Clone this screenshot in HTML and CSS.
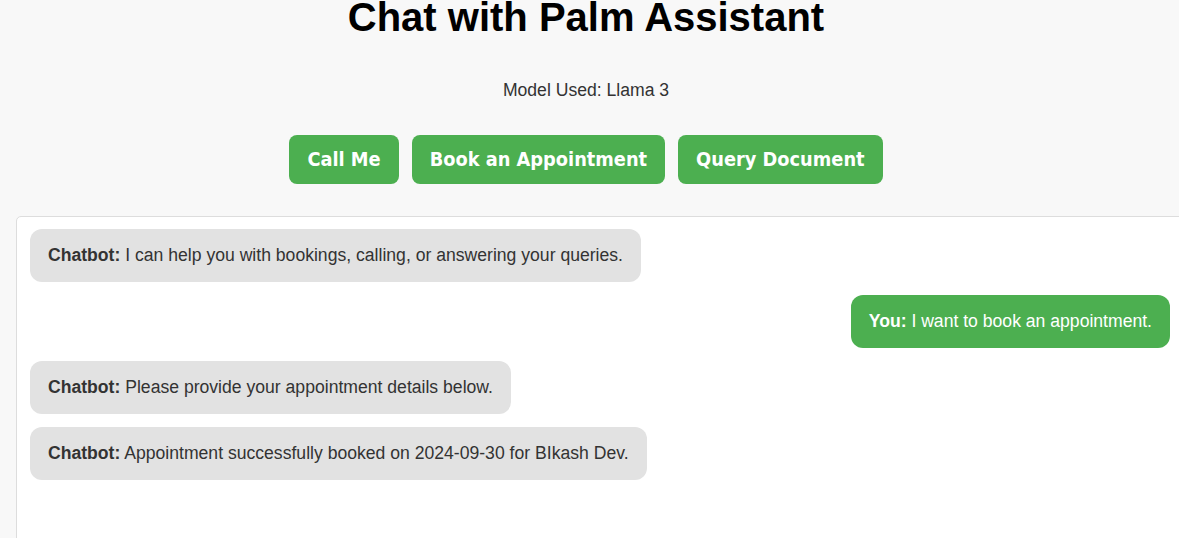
FILE: index.html
```html
<!DOCTYPE html>
<html lang="en">
<head>
<meta charset="utf-8">
<title>Chat with Palm Assistant</title>
<link rel="stylesheet" href="styles.css">
</head>
<body>
<div class="page">
  <h1 class="title">Chat with Palm Assistant</h1>
  <p class="model">Model Used: Llama 3</p>
  <div class="actions">
    <button class="btn">Call Me</button>
    <button class="btn">Book an Appointment</button>
    <button class="btn">Query Document</button>
  </div>
  <div class="chat">
    <div class="msg bot"><strong>Chatbot:</strong> I can help you with bookings, calling, or answering your queries.</div>
    <div class="msg user"><strong>You:</strong> I want to book an appointment.</div>
    <div class="msg bot"><strong>Chatbot:</strong> Please provide your appointment details below.</div>
    <div class="msg bot"><strong>Chatbot:</strong> Appointment successfully booked on 2024-09-30 for BIkash Dev.</div>
  </div>
</div>
</body>
</html>
```

FILE: styles.css
```css
html, body {
  margin: 0;
  padding: 0;
  background: #f8f8f8;
  overflow: hidden;
}
body {
  font-family: "Liberation Sans", Arial, sans-serif;
  color: #333;
}
.page {
  margin: 0 23px 0 16px;
  display: flex;
  flex-direction: column;
  align-items: center;
}
.title {
  margin: -3px 0 0;
  font-size: 40px;
  line-height: 40px;
  font-weight: bold;
  color: #000;
}
.model {
  margin: 43px 0 0;
  font-size: 17.6px;
  line-height: 20px;
  color: #333;
}
.actions {
  margin-top: 35px;
  display: flex;
  gap: 13px;
}
.btn {
  height: 49px;
  padding: 0 18px;
  border: none;
  border-radius: 8px;
  background: #4caf50;
  color: #fff;
  font-family: "DejaVu Sans Condensed", "DejaVu Sans", sans-serif;
  font-stretch: condensed;
  font-size: 19.8px;
  font-weight: bold;
}
.chat {
  align-self: stretch;
  margin-top: 32px;
  margin-right: -28px;
  height: 400px;
  padding: 12px 13px;
  background: #fff;
  border: 1px solid #ddd;
  border-radius: 5px 0 0 0;
  display: flex;
  flex-direction: column;
  align-items: flex-start;
  gap: 13px;
}
.msg {
  padding: 16px 18px;
  line-height: 21px;
  font-size: 17.6px;
  border-radius: 12px;
}
.msg.bot {
  background: #e2e2e2;
  color: #333;
}
.msg.user {
  align-self: flex-end;
  background: #4caf50;
  color: #fff;
}
```
